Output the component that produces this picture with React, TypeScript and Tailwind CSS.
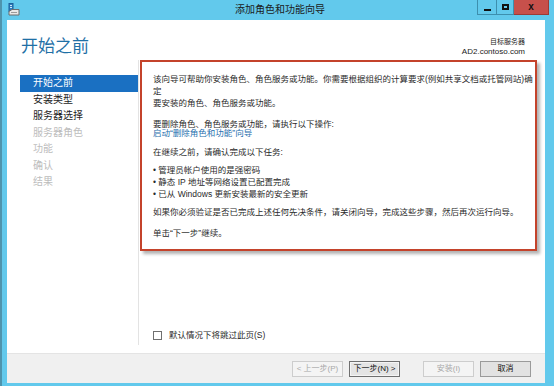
import React from 'react';

const navItems = [
    { label: '开始之前', state: 'active' },
    { label: '安装类型', state: 'normal' },
    { label: '服务器选择', state: 'normal' },
    { label: '服务器角色', state: 'disabled' },
    { label: '功能', state: 'disabled' },
    { label: '确认', state: 'disabled' },
    { label: '结果', state: 'disabled' },
];

function WizardIcon() {
    return (
        <svg width="12" height="13" viewBox="0 0 12 13">
            <rect x="1" y="0.5" width="4" height="8" fill="#2f7fc1" stroke="#1c5f98" strokeWidth="1" />
            <rect x="2" y="2" width="2" height="1" fill="#cfe6f7" />
            <rect x="2" y="4" width="2" height="1" fill="#cfe6f7" />
            <path d="M1 8.5 L4 6.5 L11 6.5 L11 12 L1 12 Z" fill="#e8e8e8" stroke="#6d6d6d" strokeWidth="1" />
            <rect x="3" y="9" width="6" height="1" fill="#9a9a9a" />
        </svg>
    );
}

function FooterButton({ label, kind }: { label: string; kind: 'disabled' | 'default' | 'normal' }) {
    const cls =
        kind === 'disabled'
            ? 'border-[#cdcdcd] bg-[#f4f4f4] text-[#a8a8a8]'
            : kind === 'default'
            ? 'border-[#6f6f6f] bg-[#e4e4e4] text-[#111] shadow-[inset_0_0_0_1px_#f4f4f4]'
            : 'border-[#9a9a9a] bg-[#e2e2e2] text-[#111]';
    return (
        <div className={`w-[51px] h-[16px] border flex items-center justify-center text-[8px] leading-none ${cls}`}>
            {label}
        </div>
    );
}

export default function App() {
    return (
        <div className="w-[554px] h-[386px] bg-[#62c9ec] border-l-2 border-[#4e94ad] flex flex-col overflow-hidden font-['Liberation_Sans','Noto_Sans_CJK_SC',sans-serif]">
            {/* Title bar */}
            <div className="h-[20px] shrink-0 grid grid-cols-[1fr_auto_1fr]">
                <div className="pl-[6px] pt-[3px]">
                    <WizardIcon />
                </div>
                <div className="text-[10px] leading-[20px] text-[#1b1b1b] pl-[4px]">添加角色和功能向导</div>
                <div className="flex justify-end pr-[5px]">
                    <div className="w-[20px] h-[15px] border border-t-0 border-[#3d8fae] flex items-end justify-center pb-[3px]">
                        <div className="w-[7px] h-[2px] bg-[#111]" />
                    </div>
                    <div className="w-[17px] h-[15px] border border-t-0 border-l-0 border-[#3d8fae] flex items-center justify-center">
                        <div className="w-[7px] h-[6px] border-2 border-[#111]" />
                    </div>
                    <div className="w-[35px] h-[15px] bg-[#c7504b] border border-t-0 border-l-0 border-[#9c3b36] flex items-center justify-center text-[10px] font-bold leading-none text-[#111]">
                        x
                    </div>
                </div>
            </div>

            {/* Window body */}
            <div className="flex-1 ml-[5px] mr-[9px] mb-[3px] bg-white flex flex-col">
                {/* Header */}
                <div className="h-[40px] shrink-0 flex justify-between">
                    <div className="pt-[18px] pl-[14px] text-[17px] leading-[18px] text-[#1f70a6]">开始之前</div>
                    <div className="pt-[17px] pr-[20px] text-right text-[#222]">
                        <div className="text-[7px] leading-[10px]">目标服务器</div>
                        <div className="text-[8px] leading-[10px]">AD2.contoso.com</div>
                    </div>
                </div>

                <div className="flex-1 flex">
                    {/* Navigation */}
                    <div className="w-[131px] shrink-0 pt-[15px] pl-[13px]">
                        {navItems.map((item) => (
                            <div
                                key={item.label}
                                className={`h-[16.5px] pl-[13px] flex items-center text-[10px] leading-none ${
                                    item.state === 'active'
                                        ? 'bg-[#1a70c2] text-white'
                                        : item.state === 'normal'
                                        ? 'text-[#1e1e1e]'
                                        : 'text-[#bdbdbd]'
                                }`}
                            >
                                {item.label}
                            </div>
                        ))}
                    </div>
                    <div className="w-px bg-[#e3e3e3] mb-[8px]" />

                    {/* Content */}
                    <div className="flex-1 flex flex-col pl-[1px]">
                        <div className="w-[397px] h-[191px] border-2 border-[#c4432b] bg-white shadow-[3px_3px_3px_rgba(0,0,0,0.3)] pt-[11px] pl-[11px] text-[8.5px] leading-[12px] text-[#2a2a2a]">
                            <p>该向导可帮助你安装角色、角色服务或功能。你需要根据组织的计算要求(例如共享文档或托管网站)确定</p>
                            <p>要安装的角色、角色服务或功能。</p>
                            <p className="mt-[9px]">要删除角色、角色服务或功能，请执行以下操作:</p>
                            <p className="-mt-[3px] text-[#1f6fae]">启动“删除角色和功能”向导</p>
                            <p className="mt-[7px]">在继续之前，请确认完成以下任务:</p>
                            <ul className="mt-[6px]">
                                <li>• 管理员帐户使用的是强密码</li>
                                <li>• 静态 IP 地址等网络设置已配置完成</li>
                                <li>• 已从 Windows 更新安装最新的安全更新</li>
                            </ul>
                            <p className="mt-[6px]">如果你必须验证是否已完成上述任何先决条件，请关闭向导，完成这些步骤，然后再次运行向导。</p>
                            <p className="mt-[9px]">单击“下一步”继续。</p>
                        </div>
                        <div className="flex-1" />
                        <div className="flex items-center gap-[7px] pl-[13px] pb-[12px] h-[24px]">
                            <div className="w-[9px] h-[9px] border border-[#707070] bg-white" />
                            <span className="text-[8.5px] leading-[12px] text-[#2a2a2a]">默认情况下将跳过此页(S)</span>
                        </div>
                    </div>
                </div>

                {/* Footer */}
                <div className="h-[30px] shrink-0 bg-[#f0f0f0] border-t border-[#e4e4e4] flex justify-end items-start pt-[7px] pr-[14px]">
                    <FooterButton label="< 上一步(P)" kind="disabled" />
                    <div className="w-[6px]" />
                    <FooterButton label="下一步(N) >" kind="default" />
                    <div className="w-[23px]" />
                    <FooterButton label="安装(I)" kind="disabled" />
                    <div className="w-[6px]" />
                    <FooterButton label="取消" kind="normal" />
                </div>
            </div>
        </div>
    );
}
